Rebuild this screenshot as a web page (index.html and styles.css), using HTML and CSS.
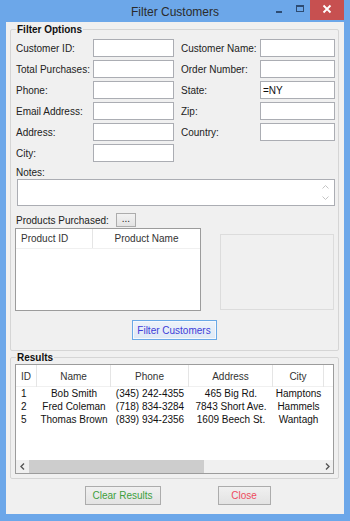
FILE: index.html
```html
<!DOCTYPE html>
<html>

<head>
    <title>Filter Customers</title>
    <meta name="viewport" content="width=device-width, initial-scale=1" charset="UTF-8">
    <link rel="stylesheet" href="styles.css">
</head>

<body>
    <div class="window">
        <!-- title bar -->
        <div class="titlebar">
            <span></span>
            <div class="title">Filter Customers</div>
            <div class="controls">
                <span class="ctl">
                    <svg width="20" height="20" viewBox="0 0 20 20"><rect x="6" y="11" width="6" height="2" fill="#2d4b72"/></svg>
                </span>
                <span class="ctl">
                    <svg width="20" height="20" viewBox="0 0 20 20"><rect x="6.5" y="5.5" width="7" height="6" fill="none" stroke="#2d4b72"/><rect x="6" y="5" width="8" height="2" fill="#2d4b72"/></svg>
                </span>
                <span class="ctl ctl-close">
                    <svg width="34" height="20" viewBox="0 0 34 20"><path d="M13.5 5.5 L20.5 12.5 M20.5 5.5 L13.5 12.5" stroke="#fff" stroke-width="1.8"/></svg>
                </span>
            </div>
        </div>

        <div class="client">
            <!-- filter options -->
            <fieldset class="group">
                <legend>Filter Options</legend>
                <div class="fields">
                    <span class="lbl">Customer ID:</span><input type="text">
                    <span class="lbl second">Customer Name:</span><input type="text">
                    <span class="lbl">Total Purchases:</span><input type="text">
                    <span class="lbl second">Order Number:</span><input type="text">
                    <span class="lbl">Phone:</span><input type="text">
                    <span class="lbl second">State:</span><input type="text" value="=NY">
                    <span class="lbl">Email Address:</span><input type="text">
                    <span class="lbl second">Zip:</span><input type="text">
                    <span class="lbl">Address:</span><input type="text">
                    <span class="lbl second">Country:</span><input type="text">
                    <span class="lbl">City:</span><input type="text">
                </div>

                <div class="notes-label">Notes:</div>
                <div class="notes">
                    <div class="vscroll">
                        <svg width="7" height="4" viewBox="0 0 7 4"><path d="M0.5 3.5 L3.5 0.5 L6.5 3.5" fill="none" stroke="#c4c4c4"/></svg>
                        <svg width="7" height="4" viewBox="0 0 7 4"><path d="M0.5 0.5 L3.5 3.5 L6.5 0.5" fill="none" stroke="#c4c4c4"/></svg>
                    </div>
                </div>

                <div class="products-head">
                    <span>Products Purchased:</span>
                    <button class="dots">...</button>
                </div>
                <div class="products">
                    <div class="plist">
                        <div class="phead">
                            <span class="pcell pcell-id">Product ID</span>
                            <span class="pcell">Product Name</span>
                        </div>
                    </div>
                    <div class="picture"></div>
                </div>

                <button class="filter-btn">Filter Customers</button>
            </fieldset>

            <!-- results -->
            <fieldset class="group group-results">
                <legend>Results</legend>
                <div class="lv">
                    <div class="lv-head">
                        <span class="hc hc-id">ID</span>
                        <span class="hc">Name</span>
                        <span class="hc">Phone</span>
                        <span class="hc">Address</span>
                        <span class="hc">City</span>
                        <span class="hc hc-fill"></span>
                    </div>
                    <div class="lv-body">
                        <div class="lv-row">
                            <span class="c-id">1</span><span>Bob Smith</span><span>(345) 242-4355</span><span>465 Big Rd.</span><span>Hamptons</span>
                        </div>
                        <div class="lv-row">
                            <span class="c-id">2</span><span>Fred Coleman</span><span>(718) 834-3284</span><span>7843 Short Ave.</span><span>Hammels</span>
                        </div>
                        <div class="lv-row">
                            <span class="c-id">5</span><span>Thomas Brown</span><span>(839) 934-2356</span><span>1609 Beech St.</span><span>Wantagh</span>
                        </div>
                    </div>
                    <div class="hscroll">
                        <span class="harrow">
                            <svg width="5" height="7" viewBox="0 0 5 7"><path d="M4 0.5 L1 3.5 L4 6.5" fill="none" stroke="#555" stroke-width="1.4"/></svg>
                        </span>
                        <span class="thumb"></span>
                        <span class="track"></span>
                        <span class="harrow">
                            <svg width="5" height="7" viewBox="0 0 5 7"><path d="M1 0.5 L4 3.5 L1 6.5" fill="none" stroke="#555" stroke-width="1.4"/></svg>
                        </span>
                    </div>
                </div>
            </fieldset>

            <div class="actions">
                <button class="btn btn-clear">Clear Results</button>
                <button class="btn btn-close">Close</button>
            </div>
        </div>
    </div>
</body>

</html>
```

FILE: styles.css
```css
body {
    margin: 0;
    font-family: "Liberation Sans", Arial, sans-serif;
    font-size: 10px;
    color: #222;
}

.window {
    width: 350px;
    height: 521px;
    box-sizing: border-box;
    background-color: #6ca7e9;
    padding: 0 6px 7px;
    display: flex;
    flex-direction: column;
}

/* title bar */
.titlebar {
    height: 22px;
    display: grid;
    grid-template-columns: 1fr auto 1fr;
    align-items: start;
}

.title {
    font-size: 12px;
    line-height: 22px;
    padding-top: 1px;
    color: #2b2b2b;
}

.controls {
    justify-self: end;
    display: flex;
}

.ctl {
    width: 20px;
    height: 20px;
    display: flex;
}

.ctl-close {
    width: 34px;
    background-color: #c75050;
}

/* window body */
.client {
    flex: 1;
    background-color: #f0f0f0;
    padding: 1px 5px 0 4px;
    display: flex;
    flex-direction: column;
}

.group {
    margin: 0;
    min-width: 0;
    border: 1px solid #d5d5d5;
    border-radius: 2px;
    padding: 3px 3px 10px 5px;
    display: flex;
    flex-direction: column;
}

.group legend {
    padding: 0 1px;
    font-weight: bold;
    line-height: 13px;
    color: #111;
}

.fields {
    display: grid;
    grid-template-columns: 77px 81px 86px 75px;
    grid-auto-rows: 18px;
    row-gap: 3px;
}

.lbl {
    align-self: center;
    line-height: 13px;
}

.lbl.second {
    padding-left: 7px;
}

.fields input {
    box-sizing: border-box;
    width: 100%;
    height: 18px;
    margin: 0;
    padding: 0 2px;
    border: 1px solid #abadb3;
    background-color: #fff;
    font-family: inherit;
    font-size: 10px;
    color: #111;
    outline: none;
}

.notes-label {
    margin-top: 4px;
    line-height: 13px;
}

.notes {
    margin-left: 1px;
    height: 27px;
    box-sizing: border-box;
    border: 1px solid #abadb3;
    background-color: #fff;
    display: flex;
    justify-content: flex-end;
}

.vscroll {
    width: 17px;
    padding: 5px 0;
    display: flex;
    flex-direction: column;
    justify-content: space-between;
    align-items: center;
}

.products-head {
    margin-top: 7px;
    height: 14px;
    display: flex;
    align-items: center;
}

.dots {
    margin-left: 7px;
    width: 20px;
    height: 14px;
    box-sizing: border-box;
    padding: 0 0 3px;
    border: 1px solid #acacac;
    background: linear-gradient(#f2f2f2, #e3e3e3);
    font-family: inherit;
    font-size: 10px;
    line-height: 8px;
    color: #222;
}

.products {
    margin-top: 1px;
    display: flex;
    align-items: flex-start;
}

.plist {
    margin-left: -1px;
    width: 186px;
    height: 83px;
    box-sizing: border-box;
    border: 1px solid #9c9c9c;
    background-color: #fff;
}

.phead {
    display: grid;
    grid-template-columns: 77px 1fr;
    height: 20px;
    box-sizing: border-box;
    border-bottom: 1px solid #f0f0f0;
}

.pcell {
    line-height: 19px;
    text-align: center;
    color: #333;
}

.pcell-id {
    text-align: left;
    padding-left: 5px;
    border-right: 1px solid #e5e5e5;
}

.picture {
    margin-left: 19px;
    margin-top: 6px;
    width: 114px;
    height: 76px;
    box-sizing: border-box;
    border: 1px solid #dcdcdc;
}

.filter-btn {
    align-self: center;
    margin-top: 9px;
    margin-left: -3px;
    width: 85px;
    height: 20px;
    box-sizing: border-box;
    padding: 0;
    border: 1px solid #6aa9e6;
    background: linear-gradient(#edf3fa, #dfe9f5);
    box-shadow: inset 0 0 0 1px #f6f9fd;
    font-family: inherit;
    font-size: 10px;
    color: #3d3dd8;
}

/* results list */
.group-results {
    padding: 0 4px 4px 5px;
}

.lv {
    margin-left: -1px;
    height: 110px;
    box-sizing: border-box;
    border: 1px solid #9c9c9c;
    background-color: #fff;
    display: flex;
    flex-direction: column;
}

.lv-head,
.lv-row {
    display: grid;
    grid-template-columns: 21px 74px 78px 84px 51px 1fr;
}

.lv-head {
    height: 22px;
    box-sizing: border-box;
    border-bottom: 1px solid #f0f0f0;
}

.hc {
    line-height: 21px;
    padding-top: 1px;
    text-align: center;
    color: #333;
    border-right: 1px solid #e5e5e5;
}

.hc-id {
    text-align: left;
    padding-left: 5px;
}

.hc-fill {
    border-right: 0;
}

.lv-body {
    flex: 1;
}

.lv-row span {
    line-height: 13px;
    text-align: center;
    white-space: nowrap;
    color: #111;
}

.lv-row .c-id {
    text-align: left;
    padding-left: 5px;
}

.hscroll {
    height: 13px;
    background-color: #f0f0f0;
    display: flex;
}

.harrow {
    width: 12px;
    display: flex;
    align-items: center;
    justify-content: center;
}

.harrow:first-child {
    width: 13px;
}

.thumb {
    width: 175px;
    background-color: #cdcdcd;
}

.track {
    flex: 1;
}

/* bottom buttons */
.actions {
    margin-top: 7px;
    padding-left: 6px;
    display: flex;
    justify-content: center;
    gap: 57px;
}

.btn {
    height: 19px;
    box-sizing: border-box;
    padding: 0;
    border: 1px solid #acacac;
    background: linear-gradient(#f0f0f0, #e3e3e3);
    font-family: inherit;
    font-size: 10px;
}

.btn-clear {
    width: 76px;
    color: #3d9f3d;
}

.btn-close {
    width: 53px;
    color: #ee4b5e;
}
```
